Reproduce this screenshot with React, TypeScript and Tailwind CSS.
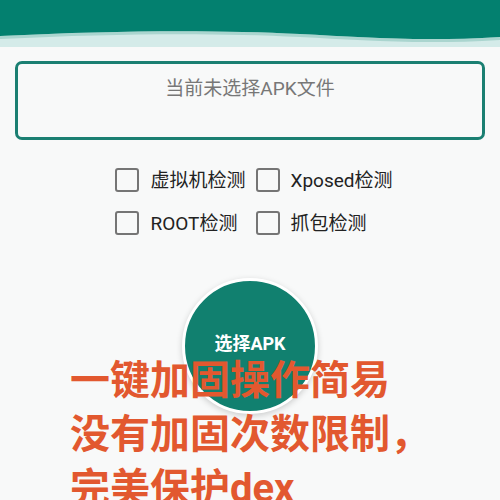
import { useState } from "react";

const FONT = { fontFamily: '"Roboto", "Noto Sans CJK SC", sans-serif' };

const OPTIONS = ["虚拟机检测", "Xposed检测", "ROOT检测", "抓包检测"];

function Header() {
  return (
    <svg
      className="block w-full h-[48px]"
      viewBox="0 0 500 48"
      preserveAspectRatio="none"
    >
      <path d="M0 30 C150 26 300 30 500 34 V47 C350 47 150 47 0 47 Z" fill="#d4ebe9" />
      <path d="M0 36 C120 30 220 30 300 34 C360 37 420 42 500 37 V0 H0 Z" fill="#03806f" />
      <path d="M0 36 C120 30 220 30 300 34 C360 37 420 42 500 37 V40 C420 45 360 40 300 37 C220 33 120 33 0 39 Z" fill="#7fbfb6" opacity="0.5" />
    </svg>
  );
}

function Check({ label, on, onToggle }: { label: string; on: boolean; onToggle: () => void }) {
  return (
    <button onClick={onToggle} className="flex items-center gap-[11px] h-[24px]">
      <span
        className={`w-[24px] h-[24px] rounded-[3px] border-[2.5px] ${
          on ? "bg-[#03806f] border-[#03806f]" : "border-[#757575]"
        }`}
      />
      <span className="text-[19px] leading-none text-[#222]">{label}</span>
    </button>
  );
}

export default function App() {
  const [checked, setChecked] = useState<string[]>([]);
  const toggle = (v: string) =>
    setChecked((c) => (c.includes(v) ? c.filter((x) => x !== v) : [...c, v]));

  return (
    <div className="w-[500px] h-[500px] overflow-hidden bg-[#f8f9f9]" style={FONT}>
      <Header />

      {/* 文件显示框 */}
      <div className="mx-[15px] mt-[13px] h-[79px] rounded-[7px] border-[3px] border-[#1a7f72] pt-[11px] text-center text-[19px] leading-[28px] text-[#777]">
        当前未选择APK文件
      </div>

      {/* 检测选项 */}
      <div className="mt-[28px] grid grid-cols-[auto_auto] justify-center gap-x-[10px] gap-y-[19px] pl-[8px]">
        {OPTIONS.map((o) => (
          <Check key={o} label={o} on={checked.includes(o)} onToggle={() => toggle(o)} />
        ))}
      </div>

      {/* 选择按钮 */}
      <div className="mt-[43px] flex justify-center">
        <button className="w-[136px] h-[136px] rounded-full bg-[#11806f] border-[3px] border-white shadow-[0_2px_6px_rgba(0,0,0,0.18)] text-white text-[18px] font-bold pb-[6px]">
          选择APK
        </button>
      </div>

      <div className="relative -mt-[60px] pl-[70px] text-[40px] leading-[54px] font-bold text-[#e2582f]">
        <div>一键加固操作简易</div>
        <div>没有加固次数限制，</div>
        <div>完美保护dex</div>
      </div>
    </div>
  );
}
